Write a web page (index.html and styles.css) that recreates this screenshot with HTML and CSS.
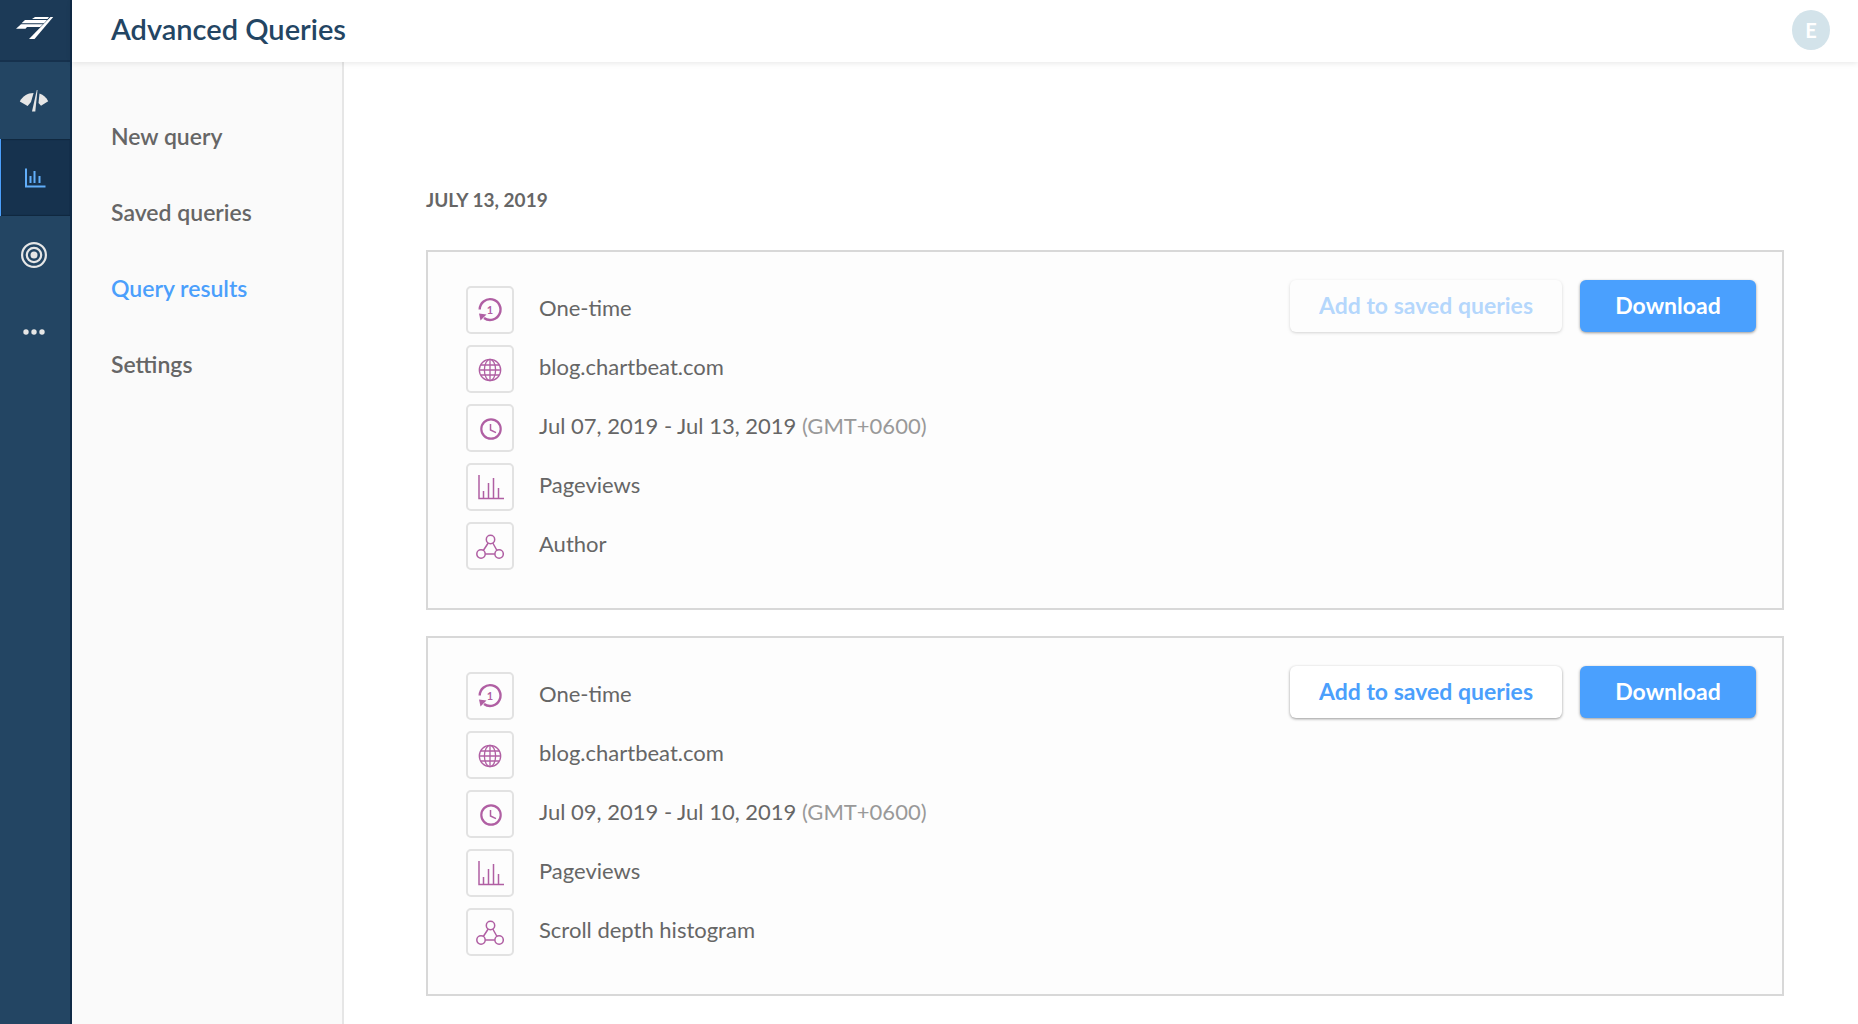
FILE: index.html
```html
<!DOCTYPE html>
<html lang="en">
<head>
  <meta charset="UTF-8">
  <title>Advanced Queries</title>
  <link rel="stylesheet" href="styles.css">
</head>
<body>
  <!-- shared icons -->
  <svg class="sprite" aria-hidden="true">
    <symbol id="icon-once" viewBox="0 0 28 28">
      <path d="M3.700 13.500A10.400 10.400 0 1 1 8 22" fill="none" stroke="currentColor" stroke-width="2.400"/>
      <path d="M3 17.500l7.500 1-6 6z" fill="currentColor"/>
      <text x="14" y="18" text-anchor="middle" class="icon-digit">1</text>
    </symbol>
    <symbol id="icon-globe" viewBox="0 0 28 28">
      <g fill="none" stroke="currentColor" stroke-width="1.300">
        <circle cx="14" cy="15" r="10.700"/>
        <ellipse cx="14" cy="15" rx="5.600" ry="10.700"/>
        <path d="M14 4.300v21.400M3.300 15h21.400M5 10h18M5 20h18"/>
      </g>
    </symbol>
    <symbol id="icon-clock" viewBox="0 0 28 28">
      <circle cx="15" cy="15" r="9.700" fill="none" stroke="currentColor" stroke-width="2.200"/>
      <path d="M14.500 10v6l5.500 2.600" fill="none" stroke="currentColor" stroke-width="1.500"/>
    </symbol>
    <symbol id="icon-bars" viewBox="0 0 28 28">
      <path d="M3 2v23.500h25M7.500 25v-7M12.500 25v-15M17.500 25v-20M22.500 25v-10" fill="none" stroke="currentColor" stroke-width="1.500"/>
    </symbol>
    <symbol id="icon-nodes" viewBox="0 0 28 28">
      <g fill="none" stroke="currentColor" stroke-width="1.500">
        <circle cx="14.500" cy="7.500" r="4.200"/>
        <circle cx="5" cy="22" r="4.200"/>
        <circle cx="23.100" cy="22" r="4.200"/>
        <path d="M12.200 11l-4.900 7.500M16.800 11l4.200 7.500M9.200 22h9.700"/>
      </g>
    </symbol>
  </svg>

  <div class="app">
    <nav class="rail" aria-label="Products">
      <a href="#" class="rail-logo" aria-label="Home">
        <svg width="40" height="24" viewBox="0 0 40 24" fill="#fff">
          <path d="M20 1h14l-1.500 2H17zM10 4h22l-3 3.200H6.500zM6 8.200h22L25 11H12l-1.500 1.800H1z"/>
          <path d="M35.500 1h2.700L19.500 23h-5.500z"/>
        </svg>
      </a>
      <a href="#" class="rail-item" aria-label="Dashboard">
        <svg width="30" height="24" viewBox="0 0 30 24" fill="#e6e6e6">
          <path d="M14.600 4L12 13l-3.400 4L.800 12.500C3.500 7.200 8.500 4 14.600 4z"/>
          <path d="M20.500 4.600c4 1.200 6.700 3.900 8.700 7.700L22 16.800 19.500 14z"/>
          <path d="M17.800 1h.700l-2.200 21.500h-3.300z"/>
        </svg>
      </a>
      <a href="#" class="rail-item active" aria-label="Queries">
        <svg width="22" height="22" viewBox="0 0 22 22" fill="none" stroke="#61aefa" stroke-width="2">
          <path d="M2 1.500V19.500H21.500M6.500 9v7M10.500 4v12M15.500 9v7"/>
        </svg>
      </a>
      <a href="#" class="rail-item" aria-label="Goals">
        <svg width="28" height="28" viewBox="0 0 28 28" fill="none" stroke="#e6e6e6" stroke-width="2.200">
          <circle cx="14" cy="14" r="11.900"/>
          <circle cx="14" cy="14" r="7.200"/>
          <circle cx="14" cy="14" r="3.500" fill="#e6e6e6" stroke="none"/>
        </svg>
      </a>
      <a href="#" class="rail-item" aria-label="More">
        <svg width="22" height="6" viewBox="0 0 22 6" fill="#e6e6e6">
          <circle cx="3" cy="3" r="2.700"/>
          <circle cx="11" cy="3" r="2.700"/>
          <circle cx="19" cy="3" r="2.700"/>
        </svg>
      </a>
    </nav>

    <div class="page">
      <header class="header">
        <h1>Advanced Queries</h1>
        <button type="button" class="avatar">E</button>
      </header>

      <div class="content">
        <nav class="menu" aria-label="Advanced Queries">
          <a href="#">New query</a>
          <a href="#">Saved queries</a>
          <a href="#" class="active">Query results</a>
          <a href="#">Settings</a>
        </nav>

        <main class="results">
          <h2>JULY 13, 2019</h2>

          <section class="card">
            <ul class="details">
              <li><span class="icon"><svg><use href="#icon-once"/></svg></span>One-time</li>
              <li><span class="icon"><svg><use href="#icon-globe"/></svg></span>blog.chartbeat.com</li>
              <li><span class="icon"><svg><use href="#icon-clock"/></svg></span><span>Jul 07, 2019 - Jul 13, 2019 <span class="zone">(GMT+0600)</span></span></li>
              <li><span class="icon"><svg><use href="#icon-bars"/></svg></span>Pageviews</li>
              <li><span class="icon"><svg><use href="#icon-nodes"/></svg></span>Author</li>
            </ul>
            <div class="actions">
              <button type="button" class="btn btn-save" disabled>Add to saved queries</button>
              <button type="button" class="btn btn-download">Download</button>
            </div>
          </section>

          <section class="card">
            <ul class="details">
              <li><span class="icon"><svg><use href="#icon-once"/></svg></span>One-time</li>
              <li><span class="icon"><svg><use href="#icon-globe"/></svg></span>blog.chartbeat.com</li>
              <li><span class="icon"><svg><use href="#icon-clock"/></svg></span><span>Jul 09, 2019 - Jul 10, 2019 <span class="zone">(GMT+0600)</span></span></li>
              <li><span class="icon"><svg><use href="#icon-bars"/></svg></span>Pageviews</li>
              <li><span class="icon"><svg><use href="#icon-nodes"/></svg></span>Scroll depth histogram</li>
            </ul>
            <div class="actions">
              <button type="button" class="btn btn-save">Add to saved queries</button>
              <button type="button" class="btn btn-download">Download</button>
            </div>
          </section>
        </main>
      </div>
    </div>
  </div>
</body>
</html>
```
FILE: styles.css
```css
* {
  box-sizing: border-box;
}
body {
  margin: 0;
  font-family: Lato, "Open Sans", sans-serif;
  font-size: 22px;
  color: #666;
  background: #fff;
}
a {
  color: inherit;
  text-decoration: none;
}
.sprite {
  display: none;
}
.app {
  display: flex;
  min-height: 100vh;
}

/* left icon rail */
.rail {
  flex: none;
  width: 72px;
  background: #234563;
  border-right: 2px solid #0f2a47;
}
.rail-logo,
.rail-item {
  display: flex;
  align-items: center;
  justify-content: center;
}
.rail-logo {
  height: 62px;
  padding-bottom: 4px;
  background: #1c3a57;
  border-bottom: 2px solid #16314d;
}
.rail-item {
  height: 77px;
  padding-right: 2px;
}
.rail-item.active {
  background: #16324e;
  border-left: 1px solid #4b9ffc;
  box-shadow: inset 0 1px 1px #10273f, inset 0 -1px 1px #10273f;
}

.page {
  flex: 1;
  min-width: 0;
  display: flex;
  flex-direction: column;
}
.header {
  display: flex;
  align-items: center;
  justify-content: space-between;
  height: 62px;
  padding: 0 28px 4px 39px;
  background: #fff;
  box-shadow: 0 1px 6px rgba(0, 0, 0, 0.1);
  z-index: 1;
}
h1 {
  margin: 0;
  font-size: 29px;
  font-weight: 600;
  line-height: 34px;
  color: #234563;
}
.avatar {
  width: 38px;
  height: 40px;
  margin-top: 2px;
  padding: 0;
  border: none;
  border-radius: 50%;
  background: #d3e3ea;
  color: #fff;
  font: 700 20px Lato, sans-serif;
}

.content {
  flex: 1;
  display: flex;
}
.menu {
  flex: none;
  display: flex;
  flex-direction: column;
  gap: 48px;
  width: 272px;
  padding: 60px 38px 0 39px;
  background: #fafafa;
  border-right: 2px solid #e6e6e6;
  font-size: 23px;
  font-weight: 600;
  line-height: 28px;
}
.menu .active {
  color: #4b9ffc;
}

.results {
  flex: 1;
  padding: 124px 74px 28px 82px;
}
h2 {
  margin: 0 0 36px;
  font-size: 19px;
  font-weight: 700;
  line-height: 28px;
}
.card {
  display: flex;
  justify-content: space-between;
  align-items: flex-start;
  margin-bottom: 26px;
  padding: 28px 26px 38px 38px;
  background: #fdfdfd;
  border: 2px solid #d8d8d8;
}
.card:last-child {
  margin-bottom: 0;
}
.details {
  display: flex;
  flex-direction: column;
  gap: 11px;
  margin: 0;
  padding: 6px 0 0;
  list-style: none;
  line-height: 44px;
}
.details li {
  display: flex;
  align-items: flex-start;
  gap: 25px;
}
.icon {
  display: flex;
  align-items: center;
  justify-content: center;
  width: 48px;
  height: 48px;
  border: 2px solid #e2e2e2;
  border-radius: 5px;
  color: #b05fa3;
}
.icon svg {
  width: 28px;
  height: 28px;
}
.icon-digit {
  font-size: 11px;
  font-weight: 700;
  fill: currentColor;
}
.zone {
  color: #999;
}

.actions {
  display: flex;
  gap: 18px;
}
.btn {
  height: 52px;
  padding: 0 24px 3px;
  border: none;
  border-radius: 6px;
  font: 700 23px Lato, sans-serif;
  box-shadow: 0 1px 3px rgba(0, 0, 0, 0.4);
  cursor: pointer;
}
.btn-save {
  min-width: 272px;
  background: #fff;
  color: #4b9ffc;
}
.btn-save:disabled {
  opacity: 0.4;
  cursor: default;
}
.btn-download {
  min-width: 176px;
  background: #4aa0fe;
  color: #fff;
}
```
